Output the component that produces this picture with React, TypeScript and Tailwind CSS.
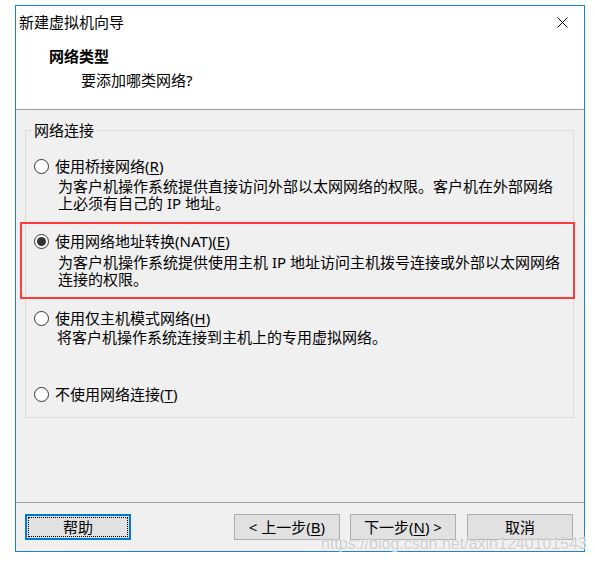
import React from "react";

const font = "font-['Noto_Sans','Noto_Sans_CJK_SC',sans-serif]";

function Radio({ checked }: { checked?: boolean }) {
  return (
    <span className="flex h-[15px] w-[15px] shrink-0 items-center justify-center rounded-full border border-[#333333] bg-white">
      {checked && <span className="h-[9px] w-[9px] rounded-full bg-[#333333]" />}
    </span>
  );
}

function Option({
  label,
  keyChar,
  checked,
  className,
}: {
  label: string;
  keyChar: string;
  checked?: boolean;
  className?: string;
}) {
  return (
    <div className={"flex h-[17px] items-center " + (className ?? "")}>
      <div className="ml-[8px] mr-[6px]">
        <Radio checked={checked} />
      </div>
      <span>
        {label}(<span className="underline underline-offset-2">{keyChar}</span>)
      </span>
    </div>
  );
}

function Button({ children, focused }: { children: React.ReactNode; focused?: boolean }) {
  if (focused) {
    return (
      <div className="flex h-[26px] w-[106px] items-center justify-center border-2 border-[#0078d7] bg-[#e1e1e1] p-[1px]">
        <div className="flex h-full w-full items-center justify-center border border-dotted border-black">
          {children}
        </div>
      </div>
    );
  }
  return (
    <div className="flex h-[26px] w-[106px] items-center justify-center border border-[#adadad] bg-[#e1e1e1]">
      {children}
    </div>
  );
}

export default function App() {
  return (
    <div className={"min-h-screen bg-white pt-[5px] pl-[15px] text-[15px] leading-[17px] text-black " + font}>
      <div className="relative flex h-[547px] w-[570px] flex-col border border-[#1883d7] bg-[#f0f0f0]">
        {/* 标题栏 + 头部 */}
        <div className="h-[104px] border-b border-[#a0a0a0] bg-white">
          <div className="flex h-[32px] items-center justify-between pl-[3px] pr-[16px]">
            <span>新建虚拟机向导</span>
            <svg width="11" height="11" viewBox="0 0 11 11">
              <path d="M0.5 0.5L10.5 10.5M10.5 0.5L0.5 10.5" stroke="#000" strokeWidth="1" />
            </svg>
          </div>
          <div className="mt-[10px] pl-[33px] font-bold">网络类型</div>
          <div className="mt-[7px] pl-[65px]">要添加哪类网络?</div>
        </div>

        {/* 内容 */}
        <div className="h-[392px] pt-[12px]">
          <fieldset className="ml-[9px] h-[296px] w-[549px] border border-[#dcdcdc]">
            <legend className="ml-[6px] px-[2px]">网络连接</legend>
            <Option className="mt-[19px]" label="使用桥接网络" keyChar="R" />
            <div className="mt-[3px] pl-[32px]">
              为客户机操作系统提供直接访问外部以太网网络的权限。客户机在外部网络
              <br />
              上必须有自己的 IP 地址。
            </div>
            <Option className="mt-[21px]" label="使用网络地址转换(NAT)" keyChar="E" checked />
            <div className="mt-[4px] pl-[32px]">
              为客户机操作系统提供使用主机 IP 地址访问主机拨号连接或外部以太网网络
              <br />
              连接的权限。
            </div>
            <Option className="mt-[22px]" label="使用仅主机模式网络" keyChar="H" />
            <div className="mt-[2px] pl-[31px]">将客户机操作系统连接到主机上的专用虚拟网络。</div>
            <Option className="mt-[40px]" label="不使用网络连接" keyChar="T" />
          </fieldset>
        </div>

        {/* 按钮区 */}
        <div className="flex flex-1 items-start border-t border-[#a0a0a0] pt-[11px]">
          <div className="ml-[9px]">
            <Button focused>帮助</Button>
          </div>
          <div className="ml-auto mr-[11px] flex gap-[10px]">
            <Button>
              &lt; 上一步(<span className="underline underline-offset-2">B</span>)
            </Button>
            <Button>
              下一步(<span className="underline underline-offset-2">N</span>) &gt;
            </Button>
            <div className="ml-[1px]">
              <Button>取消</Button>
            </div>
          </div>
        </div>

        {/* 标注框 */}
        <div className="pointer-events-none absolute left-[4px] top-[216px] h-[77px] w-[555px] border-2 border-[#ff3b3b]" />

        {/* 水印 */}
        <div className="pointer-events-none absolute left-[305px] top-[529px] whitespace-nowrap font-['Liberation_Sans',sans-serif] text-[16px] leading-[18px] text-[#cfcfcf] [text-shadow:0_0_2px_#ffffff]">
          https://blog.csdn.net/axin1240101543
        </div>
      </div>
    </div>
  );
}
